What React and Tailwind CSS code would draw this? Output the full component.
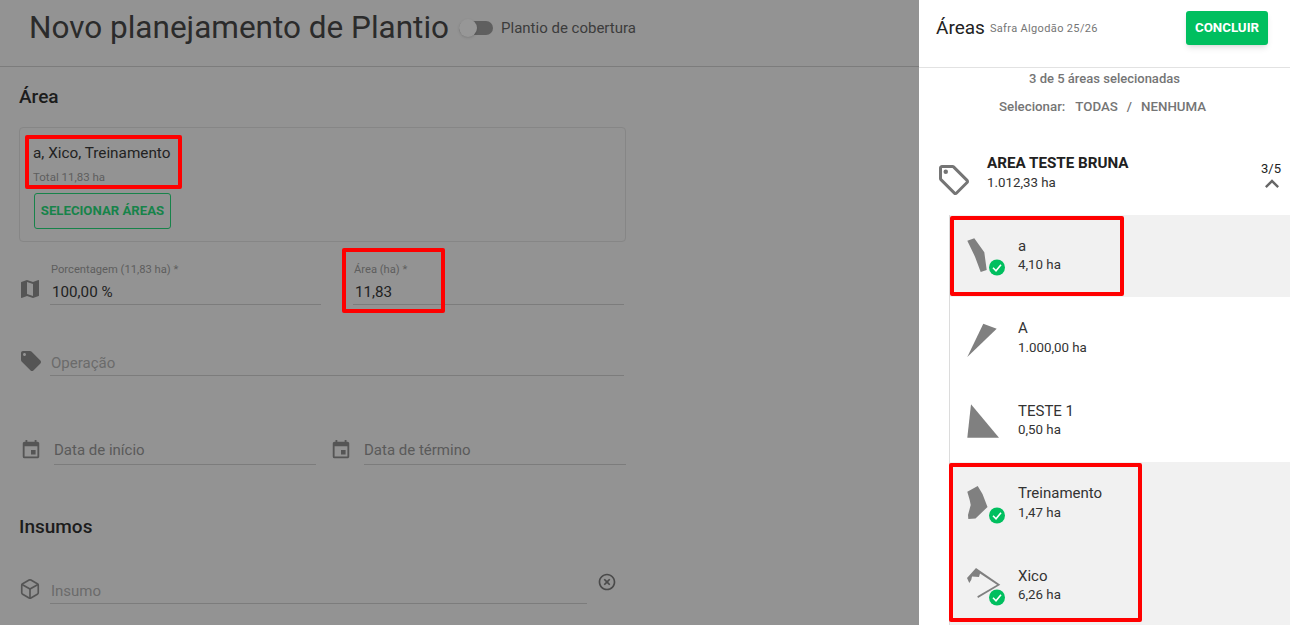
import { MdMap, MdLocalOffer, MdEvent, MdOutlineHighlightOff, MdOutlineLocalOffer, MdExpandLess } from 'react-icons/md';
import { Box } from 'lucide-react';

// Field with label on top and underline
const Field = ({ label, value, className }) => (
  <div className={`border-b border-[#7c7c7c] ${className}`}>
    {label && <div className="pl-[1px] text-[11.2px] leading-[14px] text-[#5e5e5e]">{label}</div>}
    {value}
  </div>
);

const areas = [
  { name: 'a', ha: '4,10 ha', selected: true, points: '2.3,6.7 9.3,4.3 19.3,18.3 21.7,36 15.7,38 10,22.7' },
  { name: 'A', ha: '1.000,00 ha', selected: false, points: '18.3,6.7 31.7,11.7 2.3,40' },
  { name: 'TESTE 1', ha: '0,50 ha', selected: false, points: '6,5.3 34,38.7 2.3,38.7' },
  { name: 'Treinamento', ha: '1,47 ha', selected: true, points: '2.3,9.7 12.7,4 17.5,12 22.5,25 10.5,36.5 3.3,37 3,33 5.7,23 4.7,18' },
  { name: 'Xico', ha: '6,26 ha', selected: true, points: '2,14 11,4 35.3,20.7 13,34 12.3,32.3 32,20.7 15,9.5 14,13 7,12.5 6.3,15.7 4.3,19' },
];

const AreaRow = ({ area }) => (
  <div className={`flex h-[82.5px] items-start pl-[15px] pt-[19.5px] ${area.selected ? 'bg-[#f1f1f1]' : 'bg-white'}`}>
    <svg width="44" height="46" viewBox="0 0 44 46" className="shrink-0">
      <polygon points={area.points} fill="#808080" />
      {area.selected && (
        <>
          <circle cx="32" cy="33.5" r="8" fill="#00bf5f" />
          <path d="M28 33.8l3 3 5-6" fill="none" stroke="#fff" strokeWidth="1.6" />
        </>
      )}
    </svg>
    <div className="ml-[9px] mt-[1.5px]">
      <div className="text-[15px] leading-[20px] text-[#333]">{area.name}</div>
      <div className="mt-[0.5px] text-[13.3px] leading-[18px] text-[#333]">{area.ha}</div>
    </div>
  </div>
);

const RedBox = ({ className }) => (
  <div className={`absolute border-4 border-[#ff0000] rounded-[2px] ${className}`} />
);

export default function App() {
  return (
    <div className="relative flex h-[625px] w-[1290px] overflow-hidden font-['Roboto',sans-serif]">
      {/* left form, dimmed by the drawer backdrop */}
      <div className="h-full w-[919px] shrink-0 bg-[#939393] text-[#1c1c1c]">
        <div className="flex h-[67px] items-center border-b border-[#7c7c7c] pl-[29px] pb-[10px]">
          <h1 className="text-[31.5px] font-normal leading-none text-[#2b2b2b]">Novo planejamento de Plantio</h1>
          <div className="relative ml-[10px] h-[14px] w-[34px] rounded-full bg-[#5f5f5f]">
            <div className="absolute -top-[2px] left-0 h-[18px] w-[18px] rounded-full bg-[#979797] shadow" />
          </div>
          <span className="ml-[8px] text-[15px] text-[#3c3c3c]">Plantio de cobertura</span>
        </div>

        <div className="pl-[19px] pr-[293px]">
          <h2 className="mt-[18px] text-[19px] font-medium leading-[24px]">Área</h2>

          <div className="mt-[18px] h-[114.5px] rounded-[4px] border border-[#868686] pl-[13px] pt-[16px]">
            <div className="text-[15.3px] leading-[18px] text-[#222]">a, Xico, Treinamento</div>
            <div className="mt-[8px] text-[11.5px] leading-[14px] text-[#5e5e5e]">Total 11,83 ha</div>
            <button className="mt-[9px] ml-[1px] h-[36px] w-[137px] rounded-[3px] border border-[#17834a] text-[13.2px] font-bold text-[#17834a]">
              SELECIONAR ÁREAS
            </button>
          </div>

          <div className="mt-[21px] flex items-end">
            <MdMap className="mb-[4px] h-[24px] w-[24px] shrink-0 -ml-[1px] text-[#555]" />
            <Field
              className="ml-[8px] w-[271px]"
              label="Porcentagem (11,83 ha) *"
              value={<div className="mt-[5.5px] mb-[2px] pl-[2px] text-[15.2px] leading-[20px] text-[#222]">100,00 %</div>}
            />
            <Field
              className="ml-[32px] w-[271px]"
              label="Área (ha) *"
              value={<div className="mt-[5.5px] mb-[2px] pl-[2px] text-[15.2px] leading-[20px] text-[#222]">11,83</div>}
            />
          </div>

          <div className="mt-[44px] flex items-end">
            <MdLocalOffer className="mb-[3px] h-[24px] w-[24px] shrink-0 text-[#555]" />
            <Field
              className="ml-[7px] w-[574px]"
              value={<div className="mb-[2px] pl-[1px] text-[15px] leading-[20px] text-[#6b6b6b]">Operação</div>}
            />
          </div>

          <div className="mt-[63px] flex items-end">
            <MdEvent className="mb-[4px] ml-[1px] h-[22px] w-[22px] shrink-0 text-[#555]" />
            <Field
              className="ml-[12px] w-[262px]"
              value={<div className="mb-[4px] text-[15px] leading-[20px] text-[#5a5a5a]">Data de início</div>}
            />
            <MdEvent className="mb-[4px] ml-[14px] h-[22px] w-[22px] shrink-0 text-[#555]" />
            <Field
              className="ml-[12px] w-[262px]"
              value={<div className="mb-[4px] text-[15px] leading-[20px] text-[#5a5a5a]">Data de término</div>}
            />
          </div>

          <h2 className="mt-[50px] text-[19px] font-medium leading-[24px]">Insumos</h2>

          <div className="relative mt-[39px] flex items-end">
            <Box className="mb-[4px] h-[22px] w-[22px] shrink-0 text-[#555]" strokeWidth={1.8} />
            <Field
              className="ml-[9px] w-[537px]"
              value={<div className="mb-[2px] pl-[1px] text-[15px] leading-[20px] text-[#6b6b6b]">Insumo</div>}
            />
            <MdOutlineHighlightOff className="absolute left-[578px] -top-[6px] h-[20px] w-[20px] text-[#4a4a4a]" />
          </div>
        </div>
      </div>

      {/* right drawer */}
      <div className="h-full w-[371px] shrink-0 bg-white">
        <div className="flex h-[68px] items-center border-b border-[#e2e2e2] pb-[12px] pl-[17px] pr-[22px]">
          <span className="text-[19px] leading-none text-[#222]">Áreas</span>
          <span className="ml-[5px] mt-[3px] text-[11px] tracking-[0.35px] text-[#757575]">Safra Algodão 25/26</span>
          <button className="ml-auto h-[34px] w-[82px] rounded-[3px] bg-[#00bf5f] text-[13.3px] font-bold text-white shadow-md">
            CONCLUIR
          </button>
        </div>

        <div className="mt-[2px] text-center text-[13px] font-medium leading-[18px] text-[#757575]">3 de 5 áreas selecionadas</div>
        <div className="mt-[10px] ml-[80px] flex text-[13.3px] font-medium leading-[18px] text-[#757575]">
          <span>Selecionar:</span>
          <span className="ml-[10px]">TODAS</span>
          <span className="ml-[9px]">/</span>
          <span className="ml-[9px]">NENHUMA</span>
        </div>

        <div className="relative mt-[36px] h-[62.5px] pl-[68px] pt-[1px]">
          <MdOutlineLocalOffer className="absolute left-[17px] top-[10px] h-[36px] w-[36px] text-[#757575]" />
          <div className="text-[15.2px] font-bold leading-[20px] text-[#212121]">AREA TESTE BRUNA</div>
          <div className="mt-[1px] text-[13.3px] leading-[18px] text-[#333]">1.012,33 ha</div>
          <span className="absolute right-[9px] top-[8px] text-[13px] leading-[18px] text-[#222]">3/5</span>
          <MdExpandLess className="absolute right-[4px] top-[18px] h-[28px] w-[28px] text-[#666]" />
        </div>

        <div className="ml-[30px] border-l border-[#dcdcdc]">
          {areas.map((area) => (
            <AreaRow key={area.name} area={area} />
          ))}
        </div>
      </div>

      {/* annotations from the person who took the screenshot */}
      <RedBox className="left-[25px] top-[135px] h-[54px] w-[157px]" />
      <RedBox className="left-[342px] top-[248px] h-[65px] w-[103px]" />
      <RedBox className="left-[950px] top-[216px] h-[80px] w-[174px]" />
      <RedBox className="left-[949px] top-[463px] h-[159px] w-[193px]" />
    </div>
  );
}
